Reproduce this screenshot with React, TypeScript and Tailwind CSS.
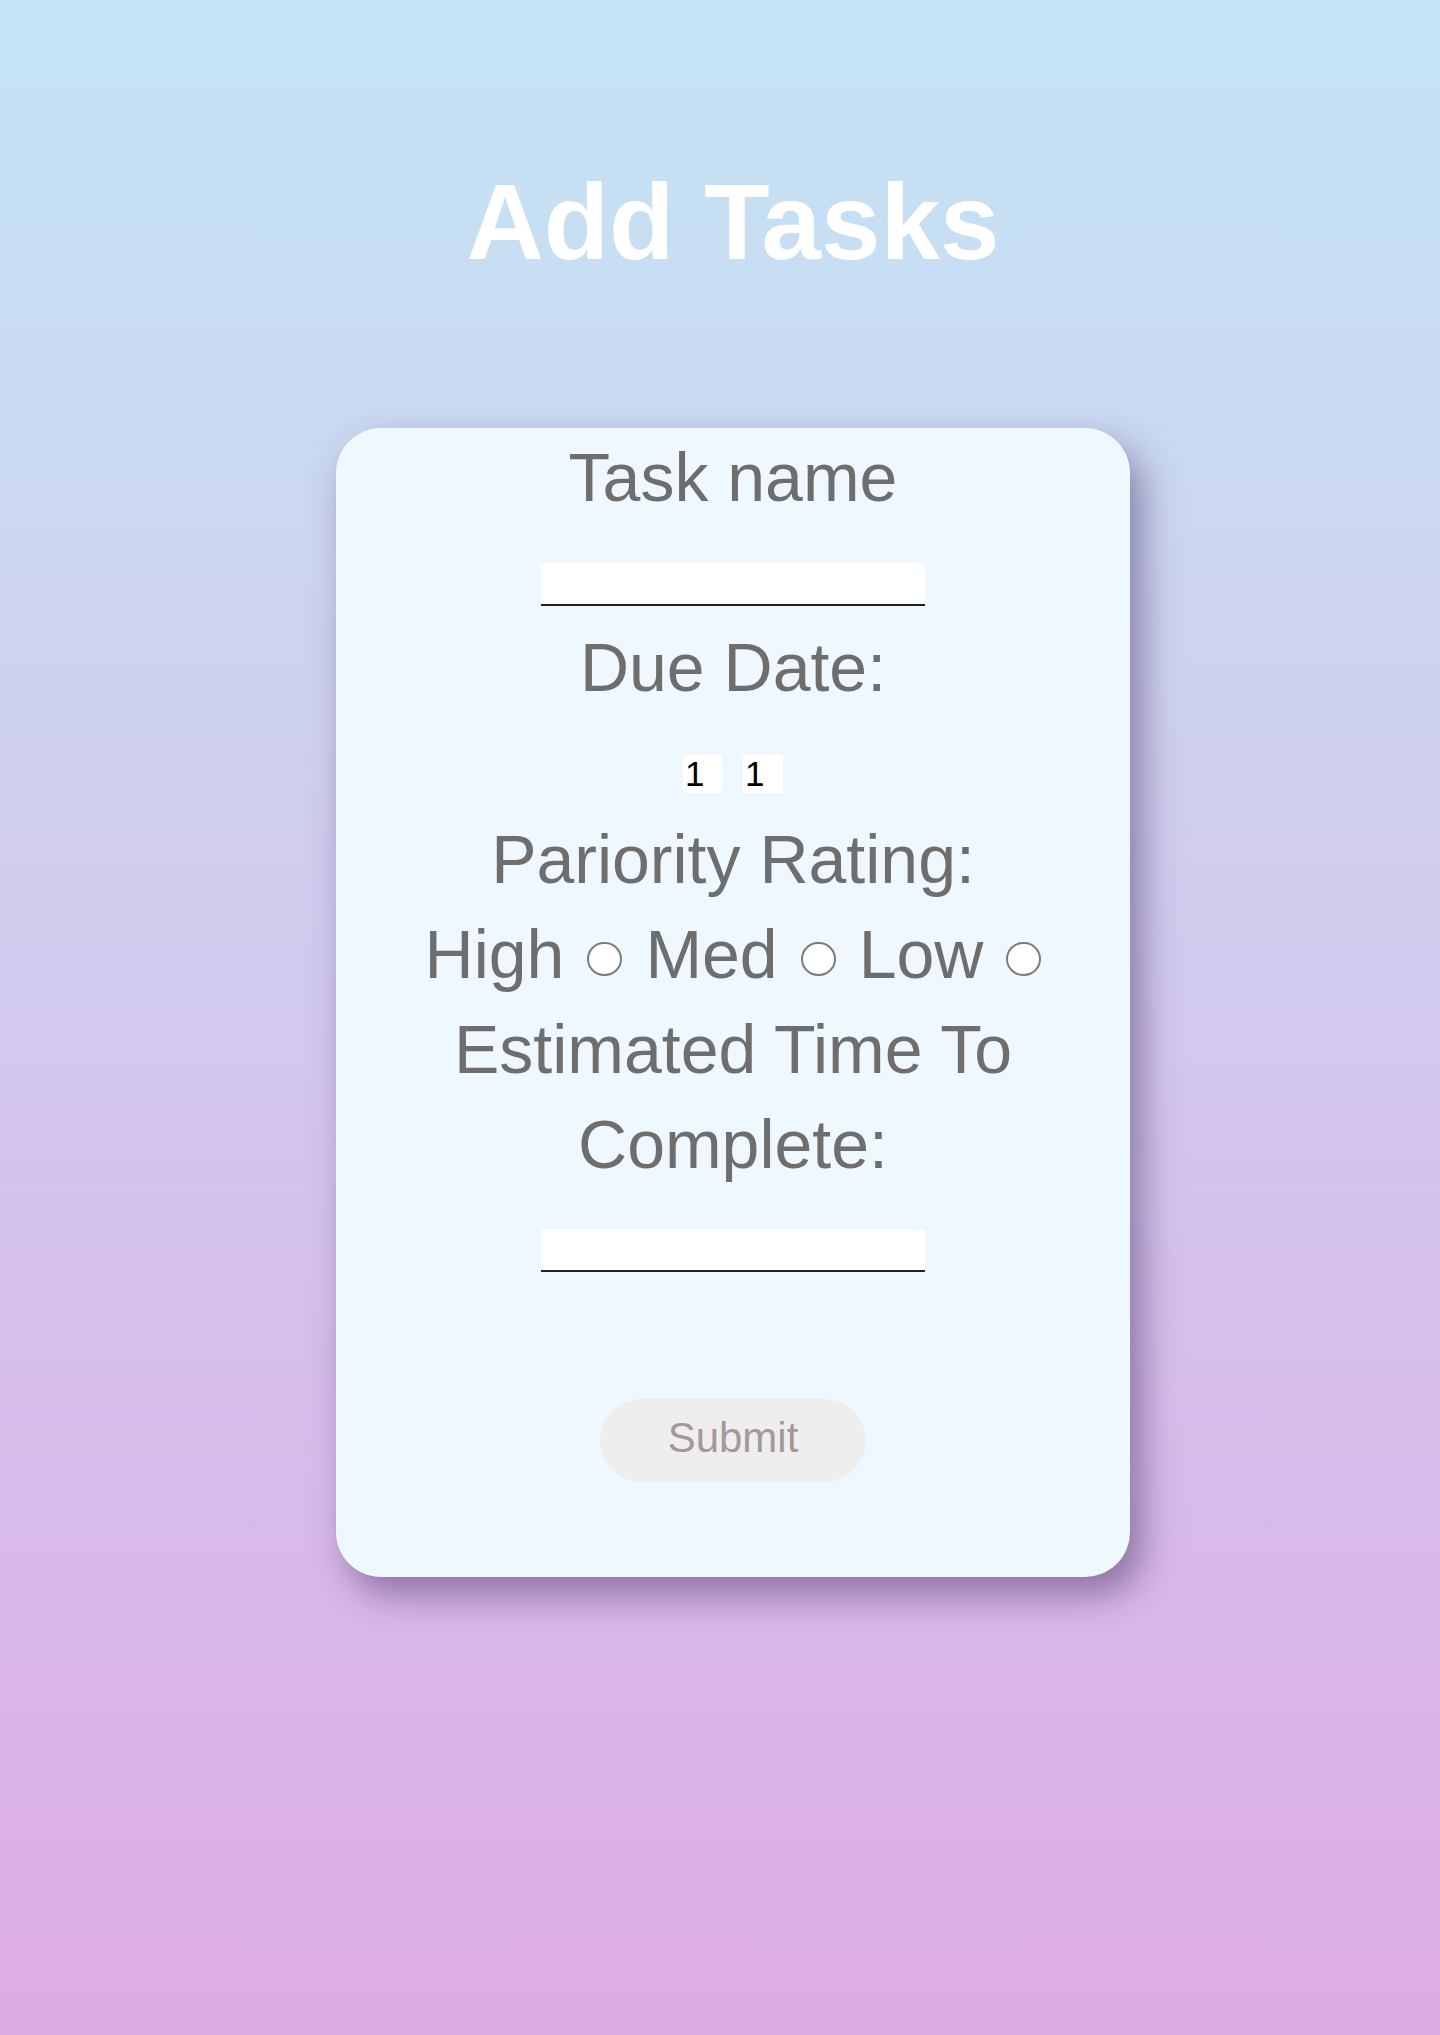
import React from "react";

function Radio({ last = false }: { last?: boolean }) {
  return (
    <span
      className={
        last
          ? "inline-block w-[35px] h-[34px] rounded-full bg-white border-2 border-[#7c7c7c] ml-[23px] mb-[2px] align-baseline"
          : "inline-block w-[35px] h-[34px] rounded-full bg-white border-2 border-[#7c7c7c] mx-[23px] mb-[2px] align-baseline"
      }
    />
  );
}

export default function App() {
  const font = { fontFamily: '"Liberation Sans", Arial, Helvetica, sans-serif' };
  return (
    <div
      className="min-h-screen w-full bg-gradient-to-b from-[#c3e5f5] to-[#ddabe6] pl-[26px] flex flex-col items-center"
      style={font}
    >
      <h1 className="pt-[162px] text-[107px] leading-[120px] font-bold text-white text-center">
        Add Tasks
      </h1>

      <form
        className="mt-[146px] w-[794px] bg-[#f0f8ff] rounded-[45px] shadow-[12px_18px_36px_rgba(70,45,95,0.5)] flex flex-col items-center pt-[2px] pb-[95px] px-[60px] text-[#6e6e6e] text-[68px] leading-[95px] text-center"
        onSubmit={(e) => e.preventDefault()}
      >
        <div>Task name</div>
        <input
          type="text"
          className="mt-[38px] w-[384px] h-[43px] bg-white border-0 border-b-2 border-[#222] outline-none"
        />
        <div className="mt-[14px]">Due Date:</div>
        <div className="mt-[40px] flex gap-[21px]">
          <div className="w-[39px] h-[38px] bg-white text-black text-[35px] leading-[38px] text-left pl-[2px]">1</div>
          <div className="w-[40px] h-[38px] bg-white text-black text-[35px] leading-[38px] text-left pl-[2px]">1</div>
        </div>
        <div className="mt-[19px]">Pariority Rating:</div>
        <div className="whitespace-nowrap">
          High<Radio />Med<Radio />Low<Radio last />
        </div>
        <div>Estimated Time To Complete:</div>
        <input
          type="text"
          className="mt-[38px] w-[384px] h-[42px] bg-white border-0 border-b-2 border-[#222] outline-none"
        />
        <button
          type="submit"
          className="mt-[127px] w-[266px] h-[83px] rounded-full bg-[#eeeeee] text-[#a69898] text-[42px] leading-[78px] pb-[5px]"
        >
          Submit
        </button>
      </form>
    </div>
  );
}
